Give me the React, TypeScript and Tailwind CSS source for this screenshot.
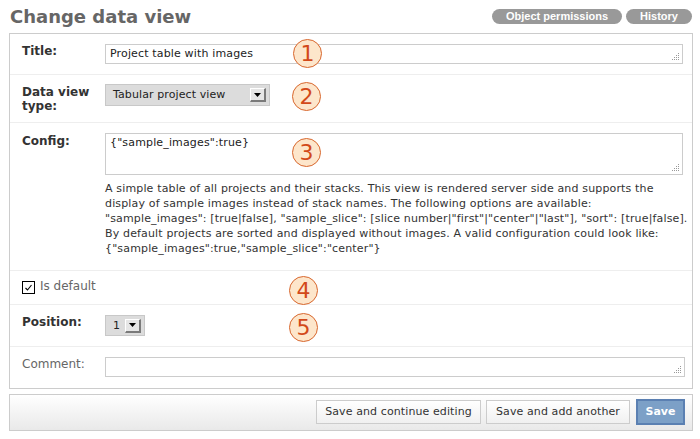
import React from "react";

const Grip = () => (
  <svg className="absolute right-[2px] bottom-[2px]" width="9" height="9" viewBox="0 0 9 9">
    {[
      [7, 1],
      [5, 3], [7, 3],
      [3, 5], [5, 5], [7, 5],
      [1, 7], [3, 7], [5, 7], [7, 7],
    ].map(([x, y], i) => (
      <rect key={i} x={x} y={y} width="1" height="1" fill="#999" />
    ))}
  </svg>
);

const Arrow = ({ w, h }: { w: string; h: string }) => (
  <div className={`${w} ${h} flex items-center justify-center bg-[#e6e6e6] border-t border-l border-t-white border-l-white border-r-2 border-b-2 border-r-[#7a7a7a] border-b-[#7a7a7a]`}>
    <svg width="7" height="4" viewBox="0 0 7 4">
      <polygon points="0,0 7,0 3.5,4" fill="#000" />
    </svg>
  </div>
);

const Circle = ({ n, x, y }: { n: string; x: string; y: string }) => (
  <div
    className={`absolute ${x} ${y} w-[29px] h-[29px] rounded-full border border-[#d8672e] bg-[#fde6cb] flex items-center justify-center text-[22px] leading-none text-[#d2491a]`}
    style={{ fontFamily: '"DejaVu Sans", sans-serif' }}
  >
    {n}
  </div>
);

export default function App() {
  return (
    <div
      className="relative w-[700px] h-[439px] overflow-hidden bg-white text-[#333]"
      style={{ fontFamily: '"DejaVu Sans", Verdana, sans-serif' }}
    >
      {/* header */}
      <div className="flex justify-between h-[33px] pl-[10px] pr-[8px]">
        <h1 className="mt-[8px] text-[18px] leading-[18px] font-bold text-[#666]">Change data view</h1>
        <div className="flex gap-[4px] mt-[9px] h-[15px]">
          <div
            className="h-[15px] px-[14px] rounded-full bg-[#999] text-white text-[11px] font-bold leading-[15px]"
            style={{ fontFamily: '"Liberation Sans", Arial, sans-serif' }}
          >
            Object permissions
          </div>
          <div
            className="h-[15px] px-[14px] rounded-full bg-[#999] text-white text-[11px] font-bold leading-[15px]"
            style={{ fontFamily: '"Liberation Sans", Arial, sans-serif' }}
          >
            History
          </div>
        </div>
      </div>

      {/* fieldset */}
      <div className="ml-[9px] w-[684px] border border-[#ccc]">
        {/* Title */}
        <div className="flex h-[41px] border-b border-[#eee] pl-[12px]">
          <div className="w-[83px] pt-[10px] text-[12px] leading-[14px] font-bold">Title:</div>
          <div className="pt-[10px]">
            <div className="relative w-[578px] h-[20px] border border-[#ccc] px-[4px] pt-[2px] text-[11px] leading-[14px] tracking-[0.15px] text-[#222]">
              Project table with images
              <Grip />
            </div>
          </div>
        </div>

        {/* Data view type */}
        <div className="flex h-[48px] border-b border-[#eee] pl-[12px]">
          <div className="w-[83px] pt-[10px] text-[12px] leading-[14px] font-bold">
            Data view
            <br />
            type:
          </div>
          <div className="pt-[9px]">
            <div className="flex items-center justify-between w-[165px] h-[22px] border border-[#c8c8c8] bg-[#dcdcdc] pl-[7px] pr-[3px] text-[11px] leading-[14px] tracking-[0.1px] text-[#222]">
              <span>Tabular project view</span>
              <Arrow w="w-[16px]" h="h-[14px]" />
            </div>
          </div>
        </div>

        {/* Config */}
        <div className="flex h-[148px] border-b border-[#eee] pl-[12px]">
          <div className="w-[83px] pt-[11px] text-[12px] leading-[14px] font-bold">Config:</div>
          <div className="pt-[10px]">
            <div className="relative w-[578px] h-[42px] border border-[#ccc] px-[4px] pt-[2px] text-[11px] leading-[14px] tracking-[0.15px] text-[#222]">
              {'{"sample_images":true}'}
              <Grip />
            </div>
            <div className="mt-[6px] text-[11px] leading-[15px] tracking-[0.15px] text-[#333] whitespace-nowrap">
              A simple table of all projects and their stacks. This view is rendered server side and supports the
              <br />
              display of sample images instead of stack names. The following options are available:
              <br />
              {'"sample_images": [true|false], "sample_slice": [slice number|"first"|"center"|"last"], "sort": [true|false].'}
              <br />
              By default projects are sorted and displayed without images. A valid configuration could look like:
              <br />
              {'{"sample_images":true,"sample_slice":"center"}'}
            </div>
          </div>
        </div>

        {/* Is default */}
        <div className="flex h-[34px] border-b border-[#eee] pl-[12px] items-start">
          <div className="mt-[10px] w-[13px] h-[13px] border border-black bg-white flex items-center justify-center">
            <svg width="9" height="9" viewBox="0 0 9 9">
              <path d="M1.5 5 L3.5 7 L7.5 2" stroke="#000" strokeWidth="1.1" fill="none" />
            </svg>
          </div>
          <div className="ml-[5px] pt-[8px] text-[12px] leading-[14px] text-[#666]">Is default</div>
        </div>

        {/* Position */}
        <div className="flex h-[42px] border-b border-[#eee] pl-[12px]">
          <div className="w-[83px] pt-[10px] text-[12px] leading-[14px] font-bold">Position:</div>
          <div className="pt-[10px]">
            <div className="flex items-center justify-between w-[40px] h-[21px] border border-[#c8c8c8] bg-[#dcdcdc] pl-[7px] pr-[3px] text-[11px] leading-[14px] text-[#222]">
              <span>1</span>
              <Arrow w="w-[16px]" h="h-[14px]" />
            </div>
          </div>
        </div>

        {/* Comment */}
        <div className="flex h-[41px] pl-[12px]">
          <div className="w-[83px] pt-[10px] text-[12px] leading-[14px] text-[#666]">Comment:</div>
          <div className="pt-[10px]">
            <div className="relative w-[580px] h-[20px] border border-[#ccc]">
              <Grip />
            </div>
          </div>
        </div>
      </div>

      {/* submit row */}
      <div className="mt-[5px] ml-[9px] w-[684px] h-[37px] border border-[#ccc] bg-gradient-to-b from-white to-[#e9e9e9] flex justify-end items-start gap-[5px] pr-[7px] pt-[4px]">
        <div className="mt-[1px] h-[24px] w-[165px] border border-[#ccc] bg-gradient-to-b from-white to-[#f0f0f0] text-[11px] leading-[22px] tracking-[0.1px] text-center text-[#333]">
          Save and continue editing
        </div>
        <div className="mt-[1px] h-[24px] w-[144px] border border-[#ccc] bg-gradient-to-b from-white to-[#f0f0f0] text-[11px] leading-[22px] tracking-[0.1px] text-center text-[#333]">
          Save and add another
        </div>
        <div className="ml-[1px] h-[26px] w-[49px] border-2 border-[#5b80b2] bg-[#7ca0c7] text-[11px] leading-[22px] text-center font-bold text-white">
          Save
        </div>
      </div>

      {/* annotation circles */}
      <Circle n="1" x="left-[293px]" y="top-[39px]" />
      <Circle n="2" x="left-[292px]" y="top-[82px]" />
      <Circle n="3" x="left-[292px]" y="top-[138px]" />
      <Circle n="4" x="left-[289px]" y="top-[276px]" />
      <Circle n="5" x="left-[289px]" y="top-[313px]" />
    </div>
  );
}
